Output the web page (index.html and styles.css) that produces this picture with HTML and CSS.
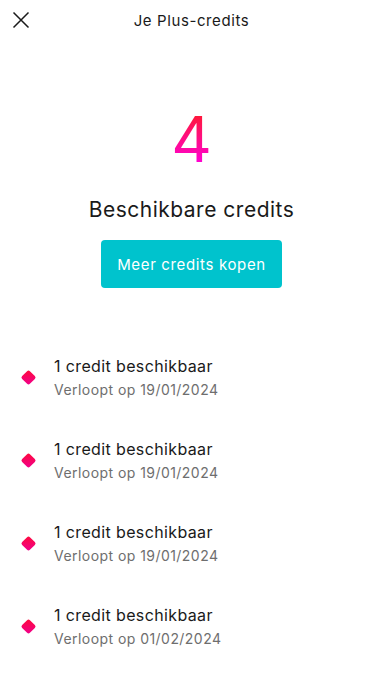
FILE: index.html
```html
<!DOCTYPE html>
<html lang="nl">
<head>
<meta charset="utf-8">
<title>Je Plus-credits</title>
<link rel="stylesheet" href="styles.css">
</head>
<body>
<div class="page">
  <header class="topbar">
    <button class="close" aria-label="Sluiten">
      <svg width="18" height="18" viewBox="0 0 18 18"><path d="M1.5 1.5 L16.5 16.5 M16.5 1.5 L1.5 16.5" stroke="#1a1a1a" stroke-width="1.5" fill="none"/></svg>
    </button>
    <h1 class="title">Je Plus-credits</h1>
  </header>
  <section class="summary">
    <div class="count">4</div>
    <div class="label">Beschikbare credits</div>
    <button class="buy">Meer credits kopen</button>
  </section>
  <ul class="list">
    <li class="item"><span class="dot"></span><div class="text"><div class="name">1 credit beschikbaar</div><div class="sub">Verloopt op 19/01/2024</div></div></li>
    <li class="item"><span class="dot"></span><div class="text"><div class="name">1 credit beschikbaar</div><div class="sub">Verloopt op 19/01/2024</div></div></li>
    <li class="item"><span class="dot"></span><div class="text"><div class="name">1 credit beschikbaar</div><div class="sub">Verloopt op 19/01/2024</div></div></li>
    <li class="item"><span class="dot"></span><div class="text"><div class="name">1 credit beschikbaar</div><div class="sub">Verloopt op 01/02/2024</div></div></li>
  </ul>
</div>
</body>
</html>
```
FILE: styles.css
```css
html, body { margin: 0; padding: 0; background: #fff; }
body { font-family: Inter, "Noto Sans", sans-serif; color: #1a1a1a; }
.page { width: 383px; }
.topbar { position: relative; height: 40px; display: flex; align-items: center; justify-content: center; }
.close { position: absolute; left: 12px; top: 11px; width: 18px; height: 18px; padding: 0; border: 0; background: none; display: flex; }
.title { margin: 0; font-size: 15px; font-weight: 400; letter-spacing: 0.6px; }
.summary { display: flex; flex-direction: column; align-items: center; padding-top: 61px; }
.count { font-size: 63px; font-weight: 400; line-height: 76px; background: linear-gradient(180deg, #ff1a30 15%, #ff00dc 85%); -webkit-background-clip: text; background-clip: text; color: transparent; }
.label { margin-top: 20px; font-size: 21px; line-height: 26px; font-weight: 400; letter-spacing: 0.5px; }
.buy { margin-top: 17px; width: 181px; height: 48px; border: 0; border-radius: 4px; background: #00c3cd; color: #fff; font-family: inherit; font-size: 15px; font-weight: 400; letter-spacing: 0.65px; padding: 0; }
.list { list-style: none; margin: 0; padding: 48px 0 0 0; }
.item { display: flex; align-items: center; height: 83px; padding-left: 23px; }
.dot { width: 11px; height: 11px; border-radius: 2px; transform: rotate(45deg); background: linear-gradient(135deg, #ff0a3a, #f0008e); margin-right: 20px; flex: none; }
.text { display: flex; flex-direction: column; }
.name { font-size: 16px; line-height: 22px; letter-spacing: 0.37px; }
.sub { font-size: 14px; line-height: 20px; color: #6e6e6e; margin-top: 3px; letter-spacing: 0.45px; }
```
